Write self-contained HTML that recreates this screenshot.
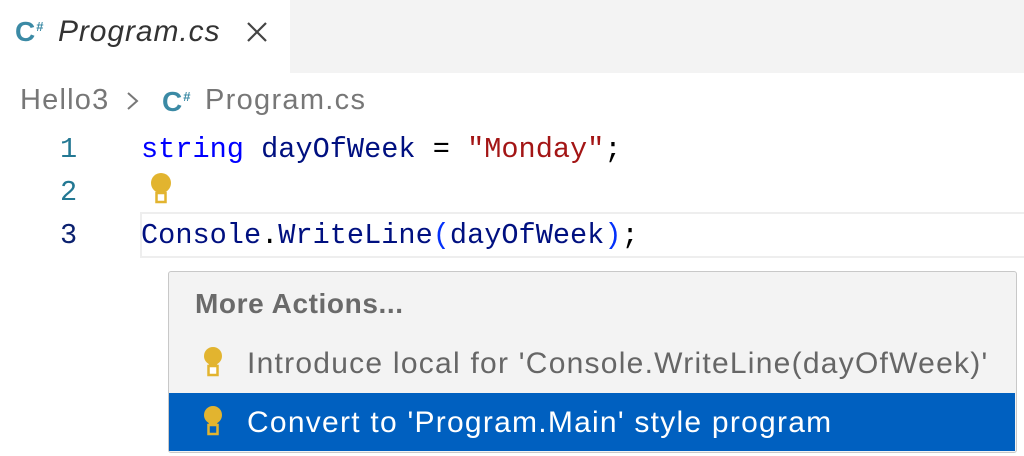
<!DOCTYPE html>
<html><head><style>
body{margin:0;width:1024px;height:456px;background:#fff;position:relative;overflow:hidden;font-family:"Liberation Sans",sans-serif}
.abs{position:absolute;white-space:nowrap}
.mono{font-family:"Liberation Mono",monospace;font-size:28.6px}
.cs{font-weight:bold;color:#3b8aa5;font-size:28px}
.cs sup{font-size:13px;vertical-align:10px;margin-left:1px}
</style></head><body>
<div class="abs" style="left:290px;top:0;width:734px;height:73px;background:#f3f3f3"></div>
<div class="abs cs" style="left:15px;top:16px">C<sup>#</sup></div>
<div class="abs" style="left:58px;top:15px;font-size:30px;font-style:italic;color:#333;letter-spacing:0.9px">Program.cs</div>
<svg class="abs" style="left:246px;top:21px" width="22" height="22"><path d="M2 2L20 20M20 2L2 20" stroke="#444" stroke-width="2.2"/></svg>
<div class="abs" style="left:20px;top:84px;font-size:29px;color:#777;letter-spacing:1.2px">Hello3</div>
<svg class="abs" style="left:126px;top:91px" width="14" height="20"><path d="M2 2L11 10L2 18" stroke="#777" stroke-width="2" fill="none"/></svg>
<div class="abs cs" style="left:162px;top:86px">C<sup>#</sup></div>
<div class="abs" style="left:205px;top:84px;font-size:29px;color:#777;letter-spacing:1.3px">Program.cs</div>
<div class="abs" style="left:140px;top:212px;width:884px;height:42px;border:2px solid #eeeeee;border-right:none"></div>
<div class="abs mono" style="left:60px;top:133px;color:#237893">1</div>
<div class="abs mono" style="left:60px;top:176px;color:#237893">2</div>
<div class="abs mono" style="left:60px;top:219px;color:#0b216f">3</div>
<div class="abs mono" style="left:141px;top:133px;color:#001080"><span style="color:#0000ff">string</span> dayOfWeek <span style="color:#000">=</span> <span style="color:#a31515">"Monday"</span><span style="color:#000">;</span></div>
<div class="abs mono" style="left:141px;top:219px;color:#001080">Console<span style="color:#000">.</span>WriteLine<span style="color:#0431fa">(</span>dayOfWeek<span style="color:#0431fa">)</span><span style="color:#000">;</span></div>
<svg class="abs" style="left:148px;top:172px" width="26" height="34"><circle cx="13" cy="11" r="10" fill="#e2b42f"/><path d="M7 14L9 20H17L19 14Z" fill="#e2b42f"/><rect x="8.5" y="21" width="9" height="9" fill="#fff" stroke="#e2b42f" stroke-width="2.5"/></svg>
<div class="abs" style="left:168px;top:271px;width:847px;height:180px;background:#f3f3f3;border:1px solid #c8c8c8;border-radius:3px"></div>
<div class="abs" style="left:195px;top:288px;font-size:28px;font-weight:bold;color:#6a6a6a;letter-spacing:0.6px">More Actions...</div>
<svg class="abs" style="left:202px;top:346px" width="26" height="34"><circle cx="11" cy="10" r="9" fill="#e2b42f"/><path d="M5 13L7 19H15L17 13Z" fill="#e2b42f"/><rect x="6.5" y="20" width="9" height="9" fill="#fff" stroke="#e2b42f" stroke-width="2.5"/></svg>
<div class="abs" style="left:247px;top:347px;font-size:30px;color:#666;letter-spacing:1.25px">Introduce local for 'Console.WriteLine(dayOfWeek)'</div>
<div class="abs" style="left:169px;top:393px;width:846px;height:58px;background:#0060c0"></div>
<svg class="abs" style="left:202px;top:405px" width="26" height="34"><circle cx="11" cy="10" r="9" fill="#e2b42f"/><path d="M5 13L7 19H15L17 13Z" fill="#e2b42f"/><rect x="6.5" y="20" width="9" height="9" fill="#0060c0" stroke="#e2b42f" stroke-width="2.5"/></svg>
<div class="abs" style="left:247px;top:406px;font-size:30px;color:#fff;letter-spacing:1.25px">Convert to 'Program.Main' style program</div>
</body></html>
